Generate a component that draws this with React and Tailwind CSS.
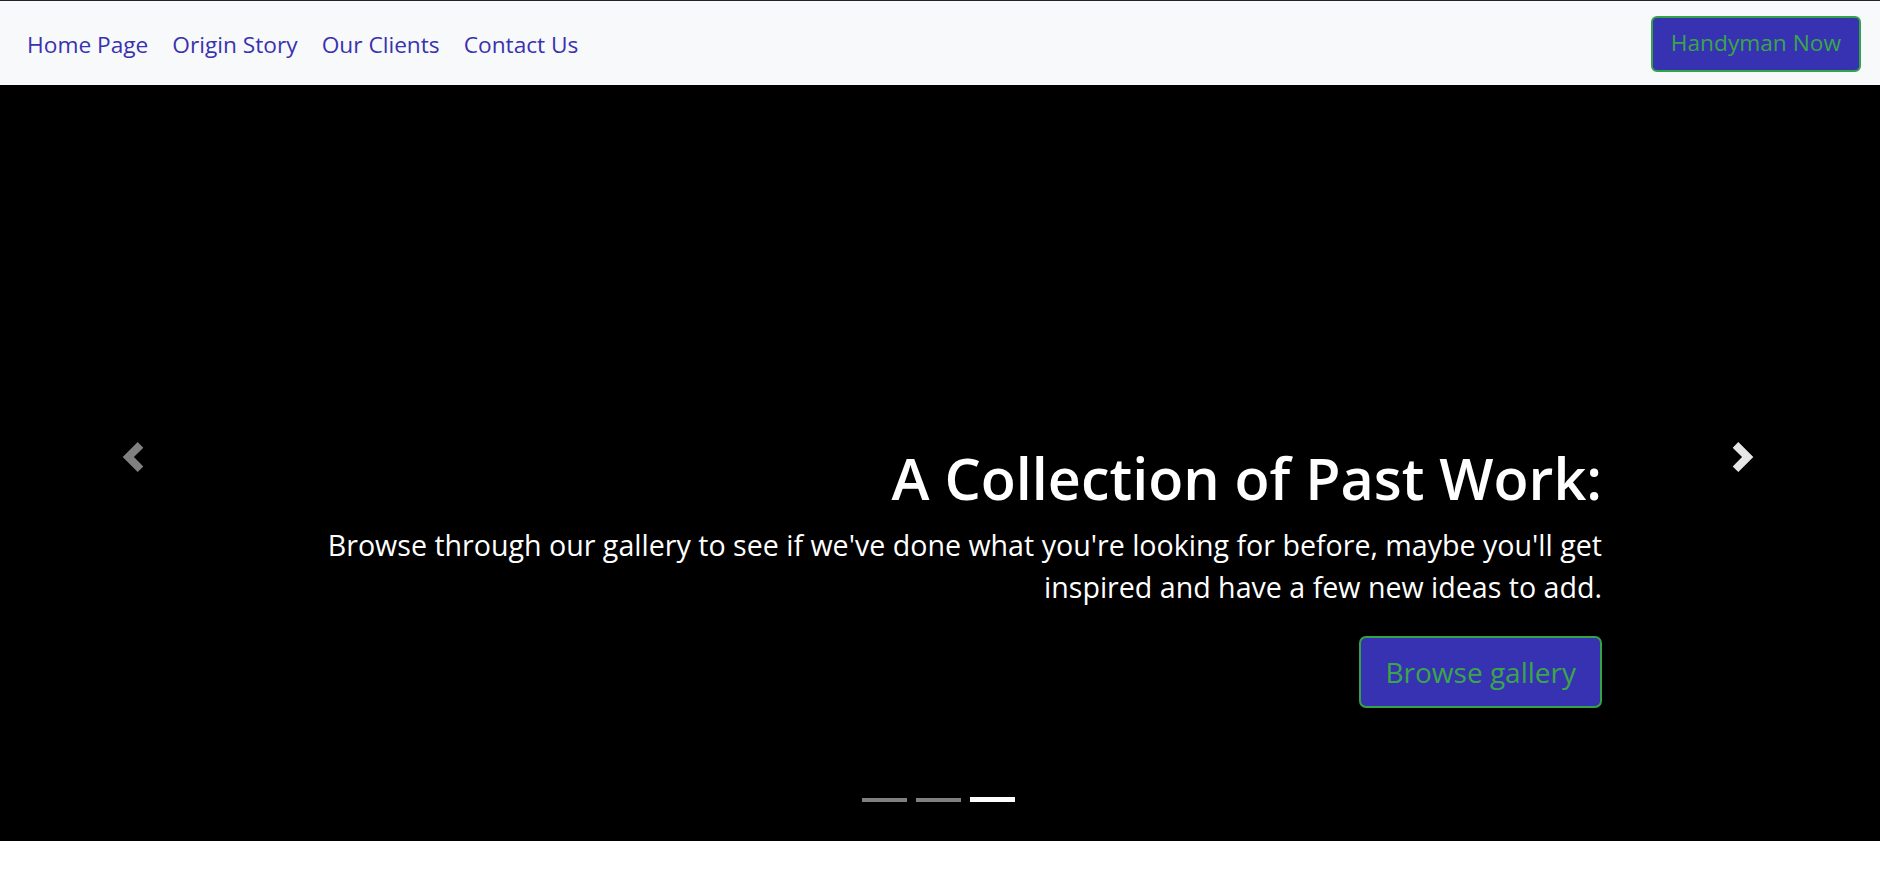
import React from 'react';

const navLinks = ['Home Page', 'Origin Story', 'Our Clients', 'Contact Us'];

const Chevron = ({ dir }) => (
    <svg className="w-[30px] h-[30px]" viewBox="0 0 8 8" fill="#fff">
        {dir === 'prev' ? (
            <path d="M5.25 0l-4 4 4 4 1.5-1.5L4.25 4l2.5-2.5L5.25 0z" />
        ) : (
            <path d="M2.75 0l-1.5 1.5L3.75 4l-2.5 2.5L2.75 8l4-4-4-4z" />
        )}
    </svg>
);

const App = () => {
    return (
        <div className="min-h-[880px] bg-white font-['Open_Sans',sans-serif]">
            {/* Navbar */}
            <nav className="flex items-center justify-between h-[85px] border-t border-[#212529] bg-[#f8f9fa] pl-[15px] pr-[19px] pt-[1px]">
                <ul className="flex items-center pt-[2px]">
                    {navLinks.map((link) => (
                        <li key={link}>
                            <a href="#" className="block px-[12px] text-[22.7px] leading-[36px] text-[#3832b0]">
                                {link}
                            </a>
                        </li>
                    ))}
                </ul>
                <button className="h-[56px] px-[18px] rounded-[6px] border-2 border-[#34a347] bg-[#3732b1] text-[22.7px] text-[#3aa64a]">
                    Handyman Now
                </button>
            </nav>

            {/* Hero carousel */}
            <div className="relative h-[756px] bg-black">
                <div className="flex flex-col items-end pl-[286px] pr-[278px] pt-[357px] text-right text-white">
                    <h1 className="text-[57.4px] leading-[72px] font-semibold">A Collection of Past Work:</h1>
                    <p className="mt-[10px] text-[28.6px] leading-[42px]">
                        Browse through our gallery to see if we've done what you're looking for before, maybe you'll get inspired and have a few new ideas to add.
                    </p>
                    <button className="mt-[28px] h-[72px] px-[24px] rounded-[7px] border-2 border-[#34a347] bg-[#3732b1] text-[28px] text-[#3aa64a]">
                        Browse gallery
                    </button>
                </div>

                {/* Controls */}
                <a href="#" className="absolute left-[118px] top-[357px] opacity-50">
                    <Chevron dir="prev" />
                </a>
                <a href="#" className="absolute left-[1728px] top-[357px] opacity-90">
                    <Chevron dir="next" />
                </a>

                {/* Indicators */}
                <div className="absolute left-0 right-0 top-[713px] flex justify-center gap-[9px] pr-[3px]">
                    <span className="w-[45px] h-[4px] bg-white opacity-50" />
                    <span className="w-[45px] h-[4px] bg-white opacity-50" />
                    <span className="w-[45px] h-[5px] -mt-[1px] bg-white" />
                </div>
            </div>
        </div>
    );
};

export default App;
